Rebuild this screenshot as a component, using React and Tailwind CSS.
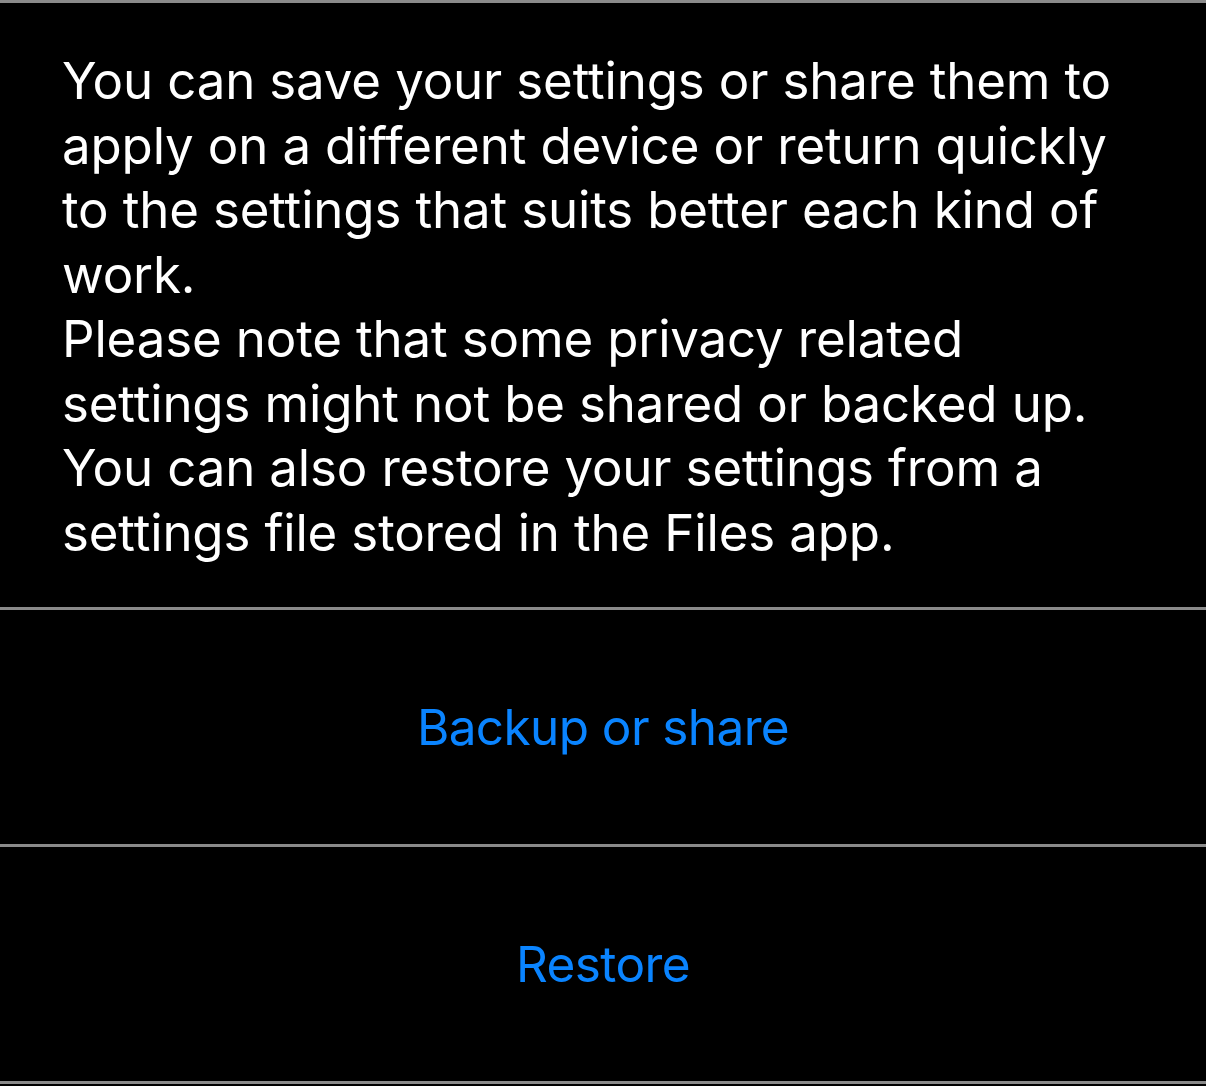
import React from 'react';

const lines = [
  'You can save your settings or share them to',
  'apply on a different device or return quickly',
  'to the settings that suits better each kind of',
  'work.',
  'Please note that some privacy related',
  'settings might not be shared or backed up.',
  'You can also restore your settings from a',
  'settings file stored in the Files app.',
];

const actions = ['Backup or share', 'Restore'];

export default function App() {
  return (
    <div
      className="w-[1206px] h-[1086px] bg-black overflow-hidden"
      style={{ fontFamily: 'Inter, "Noto Sans", sans-serif' }}
    >
      <div className="border-t-[3px] border-b-[3px] border-[#8a8a8a]">
        {/* description */}
        <div className="pl-[62px] pt-[46px] pb-[42px] text-white text-[51px] leading-[64.5px] tracking-[-0.15px]">
          {lines.map((line, i) => (
            <div key={i} className="whitespace-nowrap">{line}</div>
          ))}
        </div>

        {actions.map((label) => (
          <div
            key={label}
            className="h-[237px] border-t-[3px] border-[#8a8a8a] flex items-center justify-center text-[#0a84ff] text-[49.5px] tracking-[-0.6px]"
          >
            {label}
          </div>
        ))}
      </div>
    </div>
  );
}
